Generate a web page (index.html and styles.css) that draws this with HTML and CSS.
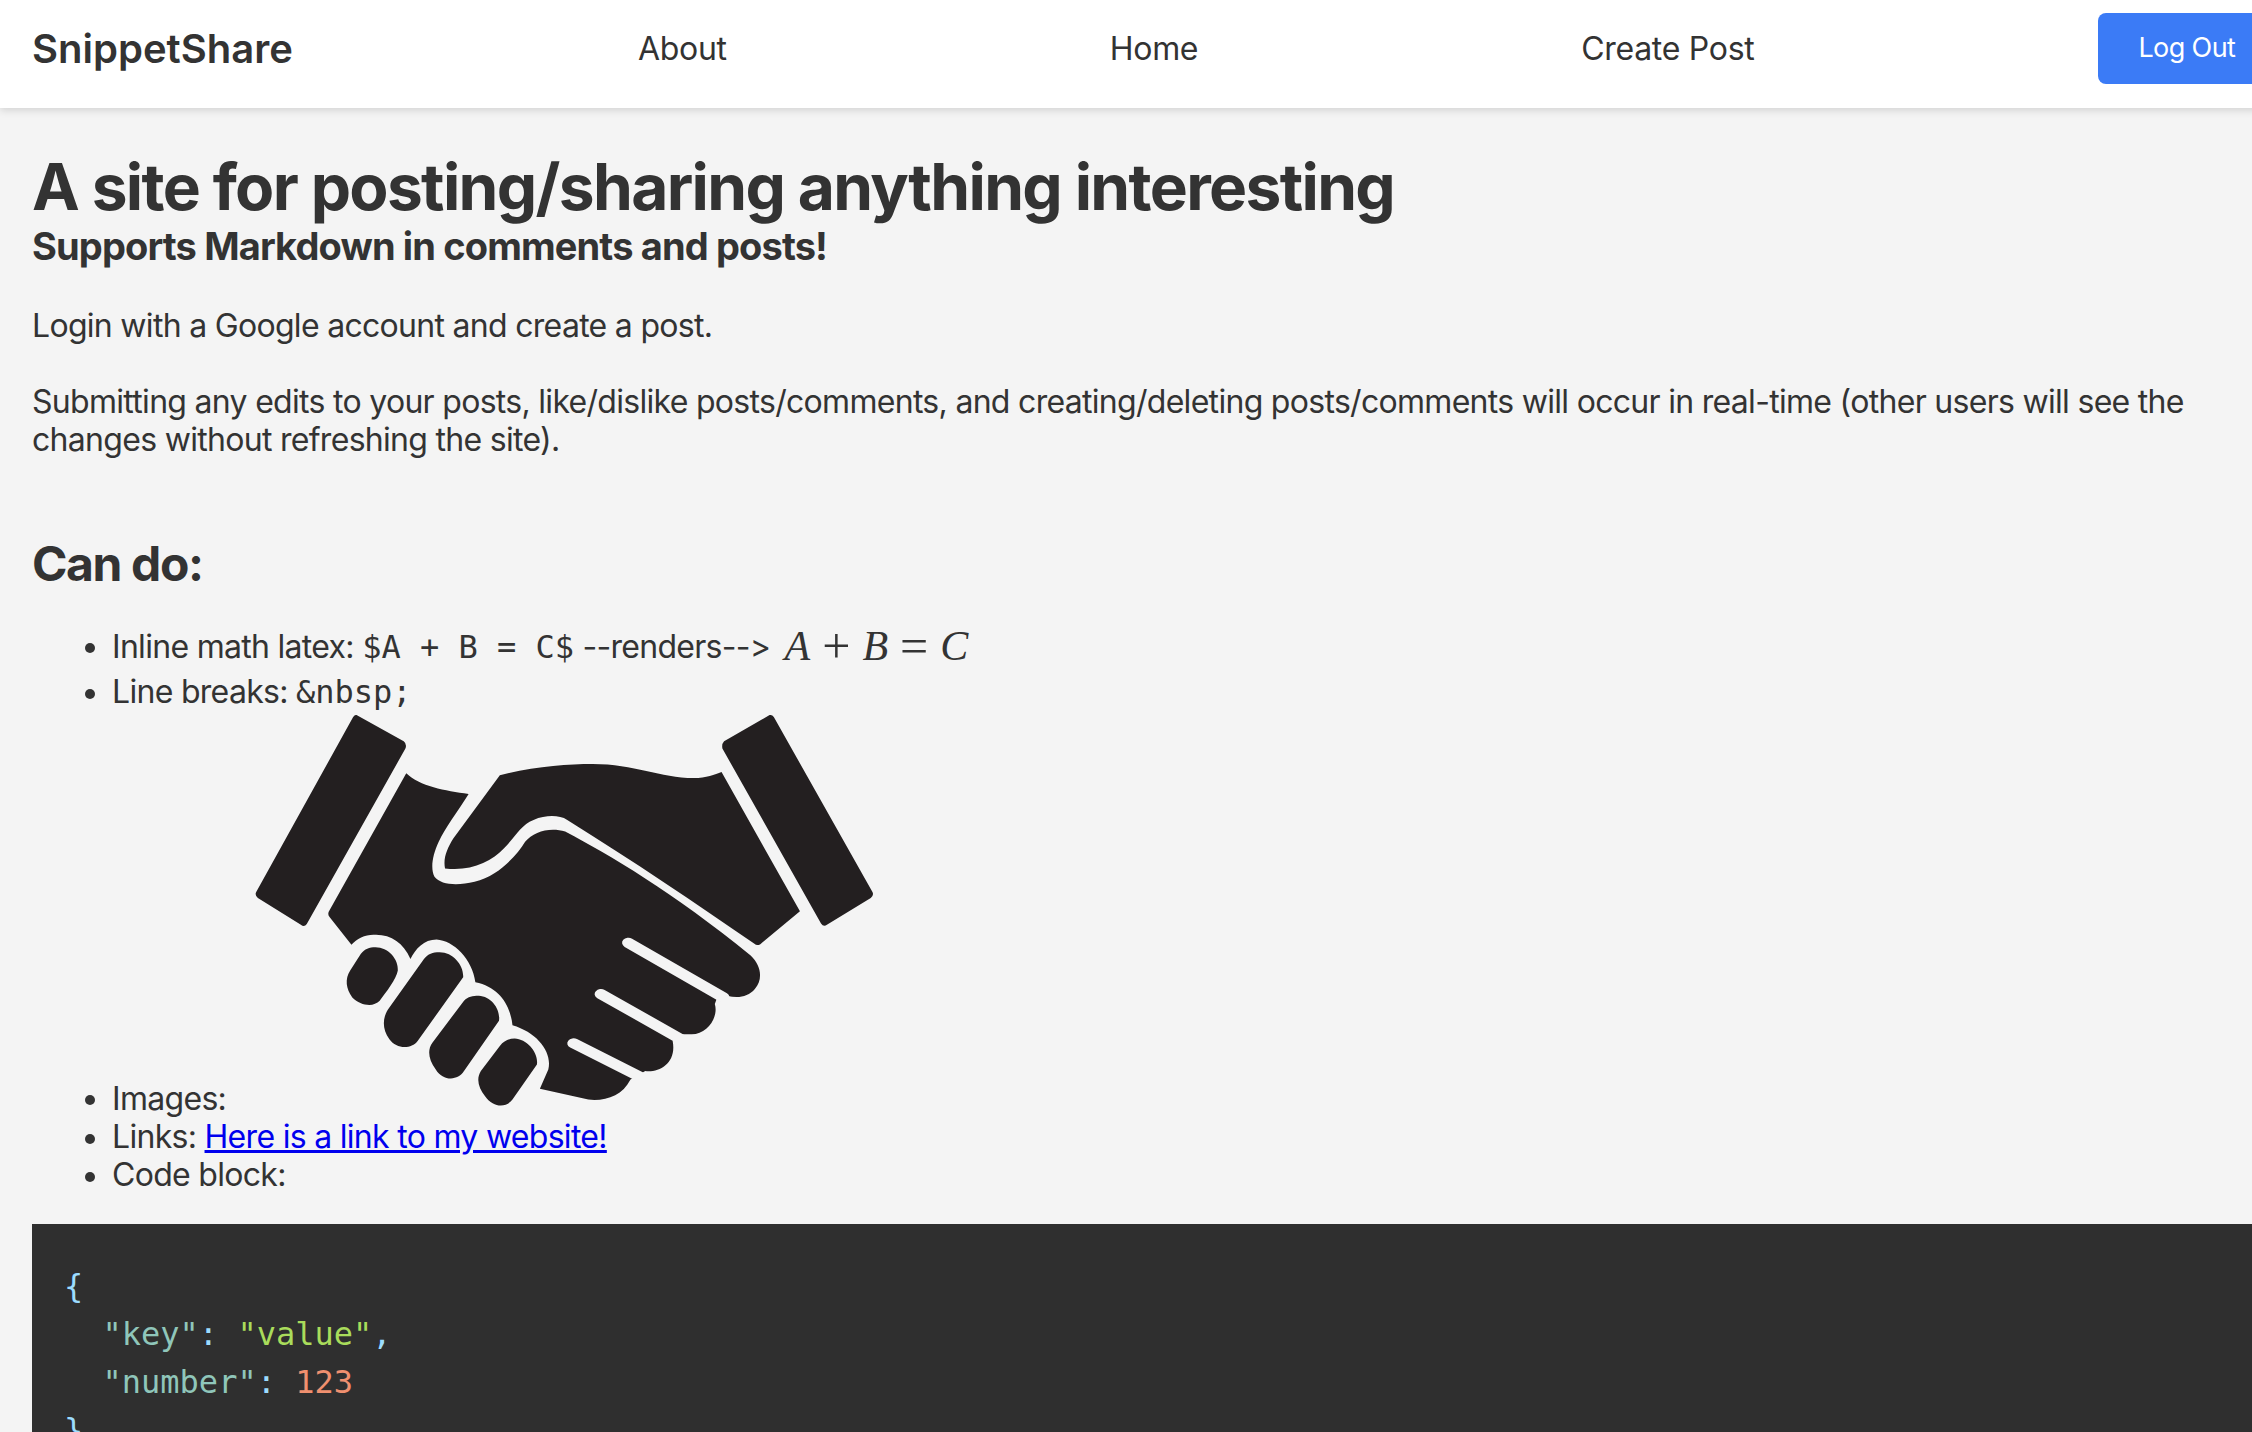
FILE: index.html
```html
<!DOCTYPE html>
<html lang="en">
<head>
<meta charset="utf-8">
<title>SnippetShare</title>
<link rel="stylesheet" href="styles.css">
</head>
<body>
<div class="page">
  <nav class="navbar">
    <a class="brand">SnippetShare</a>
    <div class="nav-links">
      <a class="nav-link">About</a>
      <a class="nav-link">Home</a>
      <a class="nav-link">Create Post</a>
    </div>
    <button class="logout">Log Out</button>
  </nav>
  <main class="content">
    <h1 class="title">A site for posting/sharing anything interesting</h1>
    <h2 class="subtitle">Supports Markdown in comments and posts!</h2>
    <p class="para">Login with a Google account and create a post.</p>
    <p class="para">Submitting any edits to your posts, like/dislike posts/comments, and creating/deleting posts/comments will occur in real-time (other users will see the changes without refreshing the site).</p>
    <h2 class="section">Can do:</h2>
    <ul class="features">
      <li class="feature feature-math">Inline math latex: <code class="inline-code">$A + B = C$</code> --renders--&gt; <span class="math"><i>A</i><span class="op">+</span><i>B</i><span class="op">=</span><i>C</i></span></li>
      <li class="feature">Line breaks: <code class="inline-code">&amp;nbsp;</code></li>
      <li class="feature feature-image">Images: <svg class="handshake" viewBox="-12 45 1580 1224" preserveAspectRatio="none" role="img" aria-label="handshake">
        <path class="ink" d="M300,72 L412,150 Q420,158 416,172 L182,696 Q176,706 168,698 L66,618 Q58,610 62,600 L292,78 Q296,70 300,72 Z"/>
        <path class="ink" d="M1280,72 L1172,150 Q1166,158 1168,172 L1402,694 Q1408,706 1416,698 L1520,618 Q1528,610 1524,600 L1290,78 Q1286,70 1280,72 Z"/>
        <path class="ink" d="M640,252 C720,225 800,218 860,218 C960,218 1020,260 1100,260 C1130,260 1150,250 1166,242 L1352,658 L1258,756 Q1250,762 1244,755 C1100,630 960,510 800,385 C780,370 750,370 720,385 C690,400 680,430 650,470 C620,510 570,540 510,530 C505,500 515,470 530,440 Z"/>
        <path class="ink" d="M418,246 C450,285 510,298 566,308 C540,360 510,410 495,450 C480,490 475,530 485,555 C500,580 540,582 580,570 C640,550 680,490 700,450 C720,420 760,405 795,420 C900,490 1050,600 1235,790 C1260,820 1265,860 1245,890 C1225,920 1190,920 1160,900 L1150,935 C1160,975 1130,1030 1090,1025 C1075,1025 1065,1020 1050,1045 C1060,1110 1020,1140 985,1135 L950,1160 C930,1210 890,1225 850,1220 L735,1188 L755,1130 C765,1080 730,1020 670,998 C665,940 640,885 582,870 C575,800 530,745 490,742 C460,742 440,770 428,800 C410,750 380,725 340,728 C320,728 300,740 288,758 L236,675 Q230,665 236,655 Z"/>
        <path class="slit" d="M945,752 L1170,915"/>
        <path class="slit" d="M880,905 L1070,1040"/>
        <path class="slit" d="M815,1052 L970,1150"/>
        <path class="ink" d="M345,765 C375,765 400,800 398,835 C395,860 370,900 355,925 C340,945 310,940 290,915 C275,890 272,860 285,835 L310,785 C320,770 330,765 345,765 Z"/>
        <path class="ink" d="M497,780 C530,780 555,820 553,855 L445,1045 C430,1070 395,1070 378,1040 C360,1010 362,975 375,950 L460,800 C470,785 480,780 497,780 Z"/>
        <path class="ink" d="M590,910 C620,912 642,950 638,985 L555,1135 C540,1165 505,1165 488,1130 C470,1100 468,1070 480,1050 L555,925 C565,912 575,910 590,910 Z"/>
        <path class="ink" d="M675,1038 C705,1040 732,1080 728,1115 L670,1220 C655,1245 625,1245 605,1210 C590,1185 583,1160 595,1135 L640,1060 C650,1045 660,1038 675,1038 Z"/>
      </svg></li>
      <li class="feature">Links: <a class="link" href="#">Here is a link to my website!</a></li>
      <li class="feature">Code block:</li>
    </ul>
    <pre class="code-block"><code><span class="punc">{</span>
  <span class="key">"key"</span><span class="punc">:</span> <span class="str">"value"</span><span class="punc">,</span>
  <span class="key">"number"</span><span class="punc">:</span> <span class="num">123</span>
<span class="punc">}</span></code></pre>
  </main>
</div>
</body>
</html>
```
FILE: styles.css
```css
html, body {
  margin: 0;
  height: 100%;
  overflow: hidden;
}
body {
  background: #f4f4f4;
  color: #333;
  font-family: Inter, "Liberation Sans", sans-serif;
  font-size: 32px;
  line-height: 38px;
  letter-spacing: -0.7px;
  font-feature-settings: "calt" 0;
}
.page {
  width: 2320px;
}
.navbar {
  display: flex;
  align-items: center;
  height: 108px;
  padding: 0 0 10px 32px;
  background: #fff;
  box-shadow: 0 2px 8px rgba(0, 0, 0, 0.15);
  box-sizing: border-box;
}
.brand {
  font-size: 40px;
  font-weight: 600;
  width: 261px;
  white-space: nowrap;
  letter-spacing: 0;
}
.nav-links {
  display: flex;
  gap: 383px;
  margin-left: 345px;
}
.nav-link {
  white-space: nowrap;
  letter-spacing: -0.3px;
}
.logout {
  margin: -2px 0 0 344px;
  height: 71px;
  padding: 0 40px;
  border: 0;
  border-radius: 8px;
  background: #3b7bf6;
  color: #fff;
  font: inherit;
  font-size: 27px;
  letter-spacing: -0.6px;
  white-space: nowrap;
  flex: none;
}
.content {
  padding: 40px 32px 0;
}
.title {
  margin: 0;
  font-size: 64px;
  line-height: 77px;
  font-weight: 700;
  letter-spacing: -1.65px;
}
.subtitle {
  margin: -2px 0 0;
  font-size: 38px;
  line-height: 46px;
  font-weight: 700;
  letter-spacing: -0.86px;
}
.para {
  margin: 38px 0 0;
}
.section {
  margin: 76px 0 0;
  font-size: 48px;
  line-height: 58px;
  font-weight: 700;
  letter-spacing: -1.4px;
}
.features {
  margin: 34px 0 0;
  padding-left: 80px;
  list-style: none;
}
.feature {
  position: relative;
}
.feature-math {
  margin-bottom: 7px;
}
.feature-image {
  margin-top: -5px;
}
.feature::before {
  content: "";
  position: absolute;
  left: -27px;
  top: 16px;
  width: 10px;
  height: 10px;
  border-radius: 50%;
  background: #333;
}
.feature-image::before {
  top: auto;
  bottom: 13px;
}
.inline-code {
  font-family: "DejaVu Sans Mono", monospace;
  font-size: 32px;
  letter-spacing: 0;
}
.math {
  display: inline-block;
  margin-left: 6px;
  font-family: "Liberation Serif", serif;
  font-size: 42px;
  line-height: 38px;
  letter-spacing: 0;
  vertical-align: -2px;
}
.op {
  margin: 0 12px;
  font-size: 50px;
  font-weight: 400;
  vertical-align: -3px;
}
.handshake {
  width: 666px;
  height: 410px;
  margin-left: -9px;
  vertical-align: -6px;
}
.ink {
  fill: #231f20;
}
.slit {
  fill: none;
  stroke: #f4f4f4;
  stroke-width: 30;
  stroke-linecap: round;
}
.link {
  color: #0000ee;
}
.code-block {
  margin: 30px 0 0;
  padding: 38px 32px 32px;
  background: #2f2f2f;
  font-size: 32px;
  line-height: 48px;
  letter-spacing: 0;
}
.code-block code {
  font-family: "DejaVu Sans Mono", monospace;
}
.punc { color: #9cdcfe; }
.key { color: #8fc6ba; }
.str { color: #a9dc5b; }
.num { color: #f0906f; }
```
